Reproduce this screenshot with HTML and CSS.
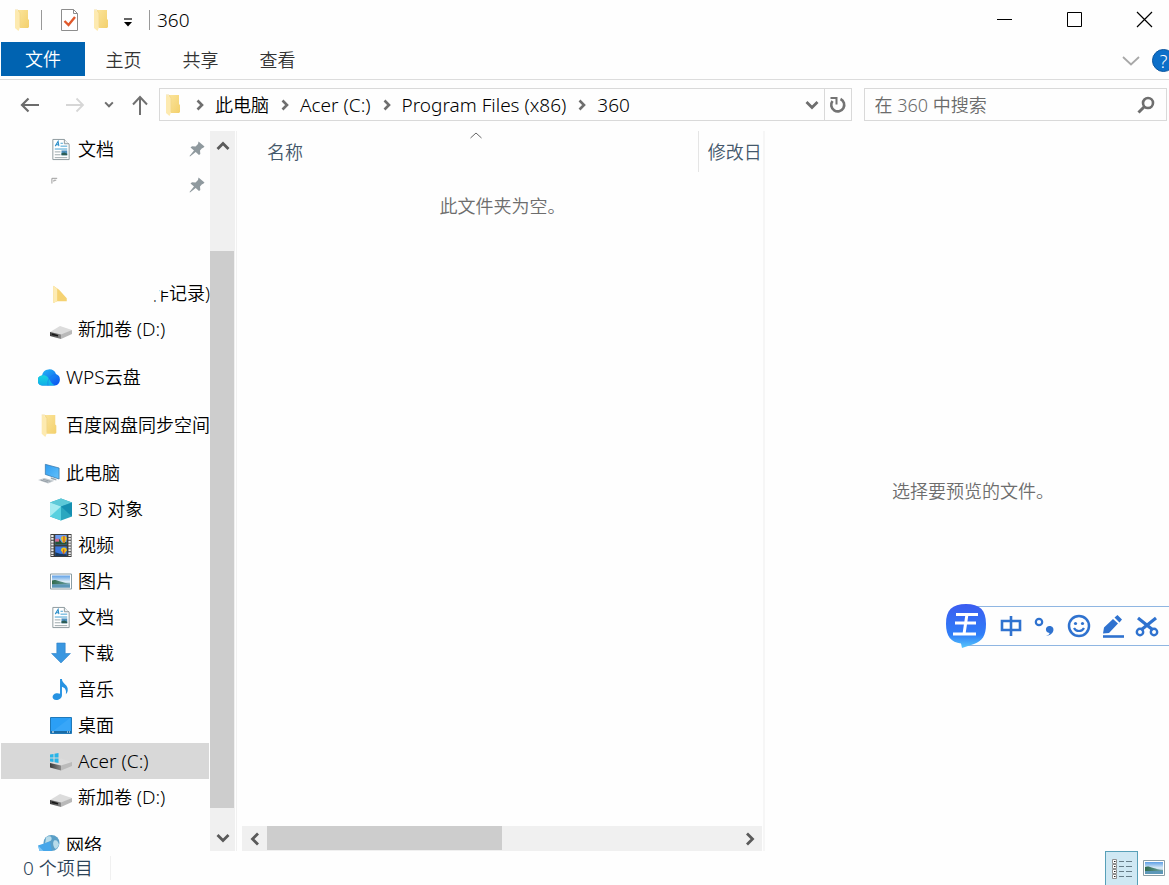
FILE: index.html
```html
<!DOCTYPE html>
<html lang="zh-CN">
<head>
<meta charset="utf-8">
<title>360</title>
<link rel="stylesheet" href="styles.css">
</head>
<body>
<svg class="defs" aria-hidden="true">
  <defs>
    <linearGradient id="gFold" x1="0" y1="0" x2="1" y2="1"><stop offset="0" stop-color="#fbe49b"/><stop offset="1" stop-color="#f3d06c"/></linearGradient>
    <linearGradient id="gCloud" x1="0" y1="0" x2="1" y2="1"><stop offset="0" stop-color="#27c3f5"/><stop offset="1" stop-color="#0a4df0"/></linearGradient>
    <linearGradient id="gTeal" x1="0" y1="0" x2="0" y2="1"><stop offset="0" stop-color="#19d3e0"/><stop offset="1" stop-color="#10aee8"/></linearGradient>
    <linearGradient id="gScreen" x1="0" y1="0" x2="1" y2="1"><stop offset="0" stop-color="#2f9df2"/><stop offset="1" stop-color="#62c1fa"/></linearGradient>
    <linearGradient id="gDisk" x1="0" y1="0" x2="1" y2="0"><stop offset="0" stop-color="#3a3a3a"/><stop offset="1" stop-color="#8a8a8a"/></linearGradient>
    <linearGradient id="gSky" x1="0" y1="0" x2="0" y2="1"><stop offset="0" stop-color="#5d9fe6"/><stop offset="0.5" stop-color="#dcecf6"/><stop offset="1" stop-color="#5f93b4"/></linearGradient>
    <linearGradient id="gLand" x1="0" y1="0" x2="1" y2="0"><stop offset="0" stop-color="#2f6a4c"/><stop offset="1" stop-color="#6fa3a8"/></linearGradient>
    <linearGradient id="gIme" x1="0" y1="0" x2="0" y2="1"><stop offset="0" stop-color="#3b5cf0"/><stop offset="0.7" stop-color="#2f7ef8"/><stop offset="1" stop-color="#58c8fb"/></linearGradient>
  </defs>
  <symbol id="folder" viewBox="0 0 16 22"><path d="M4 1h10v9l1 1v7l-1 1H5z" fill="url(#gFold)"/><path d="M1 1.500h2L6 4v14.500L4.500 22 1 19z" fill="#fdeab0"/><path d="M1 1h3l2 3v14" fill="none" stroke="#f0d588" stroke-width=".7"/></symbol>
  <symbol id="doc" viewBox="0 0 22 24"><path d="M2.500 1.500h12l5 5v16h-17z" fill="#fff" stroke="#8b989c"/><path d="M14.500 1.500v4.500h5" fill="#eef2f3" stroke="#8b989c"/><path d="M5 8.500l3-5 .8 5M6 7h3" stroke="#2d8fc9" stroke-width="1.100" fill="none"/><path d="M10.500 5.500h2.500M10.500 8.500h7" stroke="#409fd0"/><path d="M4.500 11.500h13" stroke="#409fd0"/><path d="M4.500 14.500h6M4.500 17.500h6M4.500 20.500h13" stroke="#9aa5a8"/><path d="M11.500 13h6v5h-6z" fill="#4a8dbb"/><path d="M11.500 16l3-1 3 1.500V18h-6z" fill="#2d5d55"/></symbol>
  <symbol id="disk" viewBox="0 0 22 14"><path d="M0 7L10 1l12 4-11 6z" fill="#dcdcdc"/><path d="M0 7l11 2.500V14L0 11z" fill="url(#gDisk)"/><path d="M11 9.500L22 5v4l-11 5z" fill="#b9b9b9"/><path d="M2 9.300l6 1.500" stroke="#171717" stroke-width="1.400"/></symbol>
  <symbol id="windisk" viewBox="0 0 22 18"><path d="M1 11l10-5 11 4-11 4z" fill="#dcdcdc"/><path d="M0 10.500l11 2.500v5L0 15z" fill="url(#gDisk)"/><path d="M11 13L22 9.500v4L11 18z" fill="#bbb"/><path d="M0 2l3.500-.6V5H0zM4.500 1.200L8.500.5V5h-4zM0 6h3.500v3.600L0 9zM4.500 6h4v4.500l-4-.7z" fill="#27b4e8"/></symbol>
  <symbol id="cloud" viewBox="0 0 22 20"><path d="M5 18a5 5 0 01-1-10A7.300 7.300 0 0118 6.500 6 6 0 0117 18z" fill="url(#gCloud)"/><path d="M5 18a5 5 0 01-1-10c4-1 6.500 2 8 5 1 2 3 4 5 5z" fill="url(#gTeal)"/><path d="M10 18c-1-6 2-10 8-11" fill="none" stroke="#1b6df3" opacity=".5"/></symbol>
  <symbol id="pc" viewBox="0 0 24 22"><path d="M8 1l15 4v12L8 12z" fill="url(#gScreen)" stroke="#3a77a8" stroke-width=".8"/><path d="M14 15l6 2v1.500l-6-1.500z" fill="#98a7b0"/><path d="M0 18l7-2 11 3-7 3z" fill="#c4cbd0"/><path d="M3 18.200l8 2.300M5.500 17.300l8 2.300" stroke="#7c8790" stroke-width=".7"/></symbol>
  <symbol id="cube" viewBox="0 0 22 22"><path d="M0 4L11 0l11 4v14l-11 4L0 18z" fill="#2aa7bf"/><path d="M0 4l11 4v14L0 18z" fill="#57d0df"/><path d="M0 4L11 0l11 4-11 4z" fill="#5cc9d8"/><path d="M11 8L0 18V4z" fill="#a5ebf1"/><path d="M11 8l11-4v14z" fill="#158fb1"/></symbol>
  <symbol id="film" viewBox="0 0 22 24"><path d="M0 0h22v24H0z" fill="#3c3c3c"/><path d="M2 1v22M20 1v22" stroke="#eee" stroke-width="2.500" stroke-dasharray="2 1"/><path d="M5 1h12v10H5z" fill="#6c9bf0"/><path d="M5 13h12v10H5z" fill="#3a78de"/><path d="M5 8l4-3 3 4 5-1v3H5z" fill="#245436"/><path d="M11 5a3 3 0 016 0l-2 4h-2z" fill="#e8c51c"/><path d="M13.500 2h1.200v7h-1.200z" fill="#cf4a32"/><path d="M5 5h4v3H5z" fill="#d7688c"/><path d="M11 17a3 3 0 016 0l-2 3h-2z" fill="#f0c318"/><path d="M5 19l5 1.500 7 .5v2H5z" fill="#19395e"/><path d="M13 16h1.500v5H13z" fill="#cc5d2b"/></symbol>
  <symbol id="pic" viewBox="0 0 22 16"><path d="M.5.5h21v15H.5z" fill="#fff" stroke="#8b9da4"/><path d="M2 2h18v12H2z" fill="url(#gSky)"/><path d="M2 7c4-2 8 2 18 3v1H2z" fill="url(#gLand)"/><path d="M2 11h18v3H2z" fill="#5c97b8"/></symbol>
  <symbol id="down" viewBox="0 0 20 22"><path d="M6 1h8v10h5l-9 9-9-9h5z" fill="#3a97e0" stroke="#2f84ca" stroke-width=".6"/></symbol>
  <symbol id="music" viewBox="0 0 20 24"><path d="M9 1h2c0 5 7 6 6 12-.2 2-1 3-2 4 1-5-1-7-4-8v9c0 3-3 5-6 5-5 0-5-6 0-7 1.500-.2 3 0 4 .5z" fill="#2793e2"/></symbol>
  <symbol id="desk" viewBox="0 0 22 17"><path d="M.5.5h21v16H.5z" fill="#2b9ff6" stroke="#2079b9"/><path d="M1 14h20v2H1z" fill="#1a6ba5"/><path d="M2 15h2M17 15h1M19 15h1" stroke="#fff"/><path d="M3 14L20 1v13z" fill="#46adf9" opacity=".5"/></symbol>
  <symbol id="net" viewBox="0 0 22 22"><circle cx="13.500" cy="8.500" r="8" fill="#5a9fc7"/><path d="M8 3c4-3 7 0 5 3-2 2-5 1-6 4zM16 6c3-1 4 1 5 4-1 3-3 5-4 4s-3-5-1-8z" fill="#b8dcea"/><path d="M0 11l12-4 2 10-11 5z" fill="#46a6e9"/><path d="M0 11l3 11 6-2z" fill="#7bc5f5"/></symbol>
  <symbol id="pin" viewBox="0 0 16 16"><path d="M9.500.5l6 5-1.500 1.500-1 .2-2 2.300.3 3.500-1.300 1L6.700 11 1 15.500.5 15 5 9.500 1.500 6.500 3 5.200l3.500.2L9 3z" fill="#8f999e"/></symbol>
  <symbol id="chev" viewBox="0 0 10 12"><path d="M2.500 1.500L7 6l-4.500 4.500" fill="none" stroke="currentColor" stroke-width="2.600"/></symbol>
  <symbol id="vee" viewBox="0 0 14 10"><path d="M1.500 2L7 7.500 12.500 2" fill="none" stroke="currentColor" stroke-width="2.800"/></symbol>
</svg>

<div class="window">
  <header class="titlebar">
    <svg class="qa-folder"><use href="#folder"/></svg>
    <span class="sep sep-first"></span>
    <button class="plain qa-check" aria-label="属性"><svg width="20" height="24" viewBox="0 0 20 24"><path d="M1.500 1.500h12l4 4v17h-16z" fill="#fff" stroke="#8d8d8d"/><path d="M13.500 1.500v4h4" fill="none" stroke="#8d8d8d"/><path d="M4.500 13l4 4 6.500-8" fill="none" stroke="#e0592c" stroke-width="2.400"/></svg></button>
    <button class="plain qa-new" aria-label="新建文件夹"><svg class="qa-folder"><use href="#folder"/></svg></button>
    <button class="plain qa-more" aria-label="自定义快速访问工具栏"><svg width="10" height="10" viewBox="0 0 10 10"><path d="M1 1h8" stroke="#000" stroke-width="1.200"/><path d="M1 4h8L5 8.500z"/></svg></button>
    <span class="sep"></span>
    <h1 class="title latin">360</h1>
    <div class="win-controls">
      <button class="plain" aria-label="最小化"><svg width="17" height="17"><path d="M1 8.500h15" stroke="#000"/></svg></button>
      <button class="plain" aria-label="最大化"><svg width="17" height="17"><path d="M1.500 1.500h14v14h-14z" fill="none" stroke="#000"/></svg></button>
      <button class="plain" aria-label="关闭"><svg width="17" height="17"><path d="M1 1l15 15M16 1L1 16" stroke="#000" stroke-width="1.200"/></svg></button>
    </div>
  </header>

  <nav class="tabs">
    <button class="tab tab-file">文件</button>
    <button class="tab">主页</button>
    <button class="tab">共享</button>
    <button class="tab">查看</button>
    <div class="tabs-end">
      <button class="plain" aria-label="展开功能区"><svg width="18" height="12" viewBox="0 0 18 12"><path d="M1 2l8 7.500L17 2" fill="none" stroke="#a8a8a8" stroke-width="1.800"/></svg></button>
      <button class="help" aria-label="帮助">?</button>
    </div>
  </nav>

  <div class="addressbar">
    <div class="nav-buttons">
      <button class="plain" aria-label="后退"><svg width="20" height="16" viewBox="0 0 20 16"><path d="M19 8H2M8.500 1.500L2 8l6.500 6.500" fill="none" stroke="#6c6c6c" stroke-width="2.200"/></svg></button>
      <button class="plain nav-forward" aria-label="前进"><svg width="20" height="16" viewBox="0 0 20 16"><path d="M1 8h17M11.500 1.500L18 8l-6.500 6.500" fill="none" stroke="#d6d6d6" stroke-width="1.800"/></svg></button>
      <button class="plain nav-recent" aria-label="最近位置"><svg width="10" height="7"><use href="#vee"/></svg></button>
      <button class="plain nav-up" aria-label="上移"><svg width="16" height="20" viewBox="0 0 16 20"><path d="M8 20V2M1 9.500L8 2l7 7.500" fill="none" stroke="#707070" stroke-width="2"/></svg></button>
    </div>
    <div class="path">
      <svg class="path-folder"><use href="#folder"/></svg>
      <svg class="crumb-chev"><use href="#chev"/></svg>
      <button class="plain crumb">此电脑</button>
      <svg class="crumb-chev"><use href="#chev"/></svg>
      <button class="plain crumb latin">Acer (C:)</button>
      <svg class="crumb-chev"><use href="#chev"/></svg>
      <button class="plain crumb latin">Program Files (x86)</button>
      <svg class="crumb-chev"><use href="#chev"/></svg>
      <button class="plain crumb latin">360</button>
      <button class="plain path-drop" aria-label="历史记录"><svg width="14" height="10"><use href="#vee"/></svg></button>
      <button class="plain refresh" aria-label="刷新"><svg width="18" height="18" viewBox="0 0 18 18"><path d="M11.500 3A6.500 6.500 0 113.500 5" fill="none" stroke="#737373" stroke-width="2.600"/><path d="M1.500 2h6v6.500" fill="none" stroke="#737373" stroke-width="2"/></svg></button>
    </div>
    <label class="search">
      <input type="text" placeholder="在 360 中搜索" aria-label="在 360 中搜索">
      <svg width="18" height="18" viewBox="0 0 18 18"><circle cx="11" cy="7" r="5" fill="none" stroke="#6e6e6e" stroke-width="2.600"/><path d="M7.500 10.500L1.500 16.500" stroke="#6e6e6e" stroke-width="3"/></svg>
    </label>
  </div>

  <main class="content">
    <nav class="tree">
      <a class="item sub" href="#"><svg class="ic"><use href="#doc"/></svg>文档<svg class="pin"><use href="#pin"/></svg></a>
      <a class="item sub" href="#" aria-label="已固定"><svg class="ic" viewBox="0 0 22 24"><path d="M1.500 10V4.500H7M3.500 8V6.500H6" fill="none" stroke="#999"/></svg><svg class="pin"><use href="#pin"/></svg></a>
      <div class="blank"></div>
      <a class="item sub" href="#"><svg class="ic" viewBox="0 0 22 24"><path d="M3 4l6 4 8 9v3H7l-4 2z" fill="#f5d272"/><path d="M3 4l4 3v13l-4 2z" fill="#fdebb4"/></svg><span class="record"><span class="cut">作</span>记录)</span></a>
      <a class="item sub" href="#"><svg class="ic ic-disk"><use href="#disk"/></svg><span>新加卷 <span class="latin">(D:)</span></span></a>
      <a class="item top" href="#"><svg class="ic"><use href="#cloud"/></svg><span><span class="latin">WPS</span>云盘</span></a>
      <a class="item top" href="#"><svg class="ic"><use href="#folder"/></svg>百度网盘同步空间</a>
      <a class="item top" href="#"><svg class="ic"><use href="#pc"/></svg>此电脑</a>
      <a class="item sub" href="#"><svg class="ic"><use href="#cube"/></svg><span><span class="latin">3D </span>对象</span></a>
      <a class="item sub" href="#"><svg class="ic"><use href="#film"/></svg>视频</a>
      <a class="item sub" href="#"><svg class="ic"><use href="#pic"/></svg>图片</a>
      <a class="item sub" href="#"><svg class="ic"><use href="#doc"/></svg>文档</a>
      <a class="item sub" href="#"><svg class="ic"><use href="#down"/></svg>下载</a>
      <a class="item sub" href="#"><svg class="ic"><use href="#music"/></svg>音乐</a>
      <a class="item sub" href="#"><svg class="ic"><use href="#desk"/></svg>桌面</a>
      <a class="item sub selected" href="#" aria-current="true"><svg class="ic"><use href="#windisk"/></svg><span class="latin">Acer (C:)</span></a>
      <a class="item sub" href="#"><svg class="ic ic-disk"><use href="#disk"/></svg><span>新加卷 <span class="latin">(D:)</span></span></a>
      <a class="item top" href="#"><svg class="ic"><use href="#net"/></svg>网络</a>
    </nav>
    <div class="vscroll">
      <button class="plain" aria-label="向上滚动"><svg class="turn-up" width="14" height="10"><use href="#vee"/></svg></button>
      <div class="vtrack"><div class="vthumb"></div></div>
      <button class="plain" aria-label="向下滚动"><svg width="14" height="10"><use href="#vee"/></svg></button>
    </div>
    <section class="files">
      <table class="list">
        <thead><tr>
          <th class="col-name"><svg class="sort" width="12" height="7"><path d="M.500 6L6 1l5.500 5" fill="none" stroke="#666"/></svg>名称</th>
          <th class="col-date">修改日</th>
        </tr></thead>
        <tbody><tr><td class="empty" colspan="2">此文件夹为空。</td></tr></tbody>
      </table>
      <div class="hscroll">
        <button class="plain" aria-label="向左滚动"><svg class="turn-left" width="14" height="10"><use href="#vee"/></svg></button>
        <div class="htrack"><div class="hthumb"></div></div>
        <button class="plain" aria-label="向右滚动"><svg class="turn-right" width="14" height="10"><use href="#vee"/></svg></button>
      </div>
    </section>
    <aside class="preview">选择要预览的文件。</aside>
  </main>

  <footer class="status">
    <span class="count"><span class="latin">0 </span>个项目</span>
    <div class="views">
      <button class="view view-on" aria-label="详细信息"><svg width="22" height="22" viewBox="0 0 22 22"><path d="M1.500 1.500h4v4h-4zM1.500 6.500h4v4h-4zM1.500 11.500h4v4h-4zM1.500 16.500h4v4h-4z" fill="#fff" stroke="#8f8f8f"/><path d="M3 3.500h1.500M3 8.500h1.500M3 13.500h1.500M3 18.500h1.500" stroke="#222"/><path d="M8 3.500h5M15 3.500h6M8 8.500h5M15 8.500h6M8 13.500h5M15 13.500h6M8 18.500h5M15 18.500h6" stroke="#667d88"/></svg></button>
      <button class="view" aria-label="大缩略图"><svg width="22" height="16"><use href="#pic"/></svg></button>
    </div>
  </footer>
</div>

<div class="ime">
  <button class="plain ime-logo" aria-label="王"><svg width="42" height="46" viewBox="0 0 42 46"><path d="M21 1C35 1 41 7 41 21c0 12-4 17-12 20l-12 4-1-4.500C6 39.500 1 33 1 21 1 7 7 1 21 1z" fill="url(#gIme)"/><path d="M11 11.500h22M10 20h21M8 31h23M22 11L19 31" fill="none" stroke="#fff" stroke-width="3"/></svg></button>
  <button class="plain ime-mode" aria-label="中文"><svg width="24" height="24" viewBox="0 0 24 24"><path d="M3 7h18v9H3zM12 2v20" fill="none" stroke="#2f72cf" stroke-width="2.600"/></svg></button>
  <button class="plain" aria-label="标点"><svg width="24" height="24" viewBox="0 0 24 24"><circle cx="6" cy="8" r="3.200" fill="none" stroke="#2f72cf" stroke-width="2.200"/><path d="M13 22c3-1 3.500-2 3.500-3-5-.5-4.500-7 0-7 6 0 5.500 9-3.500 10z" fill="#2f72cf"/></svg></button>
  <button class="plain" aria-label="表情"><svg width="24" height="24" viewBox="0 0 24 24"><circle cx="12" cy="12" r="10" fill="none" stroke="#2f72cf" stroke-width="2.500"/><circle cx="8.500" cy="9.500" r="1.600" fill="#2f72cf"/><circle cx="15.500" cy="9.500" r="1.600" fill="#2f72cf"/><path d="M7 14c2 4 8 4 10 0" fill="none" stroke="#2f72cf" stroke-width="2.200"/></svg></button>
  <button class="plain" aria-label="手写"><svg width="24" height="24" viewBox="0 0 24 24"><path d="M2 19.500l1-6L12 5l5 4.500-9 9.500zM13.500 3.500L16.500 1 21 5.500l-2.500 3z" fill="#2f72cf"/><path d="M2 22.500h21" stroke="#2f72cf" stroke-width="2.600"/></svg></button>
  <button class="plain" aria-label="截图"><svg width="24" height="24" viewBox="0 0 24 24"><path d="M3 4l15 12M21 4L6 16" stroke="#2f72cf" stroke-width="3.200" fill="none"/><circle cx="5" cy="18" r="3.200" fill="none" stroke="#2f72cf" stroke-width="2.400"/><circle cx="19" cy="18" r="3.200" fill="none" stroke="#2f72cf" stroke-width="2.400"/></svg></button>
</div>
</body>
</html>
```
FILE: styles.css
```css
* { box-sizing: border-box; }

body {
  margin: 0;
  background: #fefefe;
  color: #000;
  font-family: "Noto Sans", "Noto Sans CJK SC", sans-serif;
  font-size: 18px;
  font-weight: 350;
  line-height: 24px;
  overflow: hidden;
}

button, input, th, h1 { font: inherit; color: inherit; }
svg { display: block; flex: none; }
.defs { position: absolute; width: 0; height: 0; }

.plain {
  display: flex;
  align-items: center;
  justify-content: center;
  padding: 0;
  border: 0;
  background: none;
}

/* Latin runs are set slightly larger than the Chinese text around them */
.latin { font-size: 19px; line-height: 22px; }

.window { display: flex; flex-direction: column; height: 100vh; }

/* Title bar */
.titlebar { display: flex; align-items: center; height: 42px; padding: 0 16px 3px 14px; }
.qa-folder { width: 16px; height: 22px; }
.sep { width: 1px; height: 20px; background: #999; }
.sep-first { margin-left: 11px; }
.qa-check { margin-left: 18px; }
.qa-new { margin-left: 13px; }
.qa-more { margin: 6px 16px 0 14px; }
.title { margin: 0 0 0 7px; }
.win-controls { display: flex; gap: 53px; margin-left: auto; }

/* Ribbon tabs */
.tabs { display: flex; height: 38px; padding-left: 1px; border-bottom: 1px solid #dcdcdc; overflow: hidden; }
.tab { width: 77px; height: 36px; padding: 0; border: 0; background: none; color: #333; }
.tab-file { width: 84px; height: 34px; background: #0063b1; color: #fff; }
.tabs-end { display: flex; align-items: center; gap: 12px; margin: 0 -6px 0 auto; }
.help { width: 23px; height: 23px; padding: 0; border: 1px solid #0a559f; border-radius: 50%; background: #0c6fc9; color: #fff; line-height: 20px; }

/* Address bar */
.addressbar { display: flex; align-items: flex-start; height: 51px; padding: 8px 2px 0 0; }
.nav-buttons { display: flex; align-items: center; width: 159px; height: 33px; padding-left: 20px; color: #6e6e6e; }
.nav-forward { margin-left: 25px; }
.nav-recent { margin-left: 19px; }
.nav-up { margin-left: 18px; }
.path { display: flex; flex: 1; align-items: center; height: 33px; border: 1px solid #d9d9d9; color: #6e6e6e; }
.path-folder { width: 16px; height: 22px; margin: 0 8px 0 5px; }
.crumb { color: #000; }
.crumb-chev { width: 10px; height: 12px; margin: 0 10px 0 6px; }
.crumb + .crumb-chev { margin: 0 10px 0 11px; }
.path-drop { margin-left: auto; width: 24px; }
.refresh { width: 27px; height: 100%; border-left: 1px solid #d9d9d9; }
.search { display: flex; flex: 0 0 26%; align-items: center; height: 33px; margin-left: 12px; padding: 0 11px 0 10px; border: 1px solid #d9d9d9; }
.search input { flex: 1; min-width: 0; padding: 0; border: 0; outline: 0; background: none; }
.search input::placeholder { color: #6b6b6b; opacity: 1; }

/* Main area */
.content { display: flex; flex: 1; min-height: 0; }

.tree { width: 210px; padding: 0 1px; overflow: hidden; }
.item { display: flex; align-items: center; height: 36px; color: inherit; text-decoration: none; white-space: nowrap; }
.sub { padding-left: 49px; }
.top { padding-left: 37px; margin-top: 12px; }
.ic { width: 22px; height: 23px; margin-right: 6px; }
.ic-disk { height: 14px; margin-top: 6px; }
.blank { height: 72px; }
.pin { width: 16px; height: 16px; margin: 0 4px 0 auto; }
.selected { background: #d8d8d8; }
.record { display: flex; margin-left: 73px; }
/* Only the foot of the left stroke and the lower right part stay visible */
.cut { clip-path: polygon(0 80%, 8px 80%, 8px 40%, 100% 40%, 100% 100%, 0 100%); }

.vscroll { display: flex; flex-direction: column; width: 25px; background: #f0f0f0; color: #5a5a5a; }
.vscroll .plain { height: 30px; }
.vscroll .plain:last-child { height: 26px; }
.vtrack { flex: 1; padding-top: 90px; }
.vthumb { height: 97%; width: 24px; background: #cdcdcd; }
.turn-up { transform: rotate(180deg); }
.turn-left { transform: rotate(90deg); }
.turn-right { transform: rotate(-90deg); }

.files { display: flex; flex: 532; flex-direction: column; min-width: 0; padding-left: 5px; margin-left: 1px; border-left: 1px solid #f1f1f1; border-right: 2px solid #f6f6f6; }
.list { width: 100%; border-collapse: collapse; table-layout: fixed; color: #44586b; }
.list th { height: 41px; padding: 0; text-align: left; font-weight: inherit; }
.col-name { position: relative; border-right: 1px solid #e5e5e5; }
.list .col-name { padding-left: 25px; }
.list .col-date { width: 65px; padding-left: 9px; white-space: nowrap; overflow: hidden; }
.sort { position: absolute; top: 1px; left: 50%; }
.list .empty { height: 68px; padding: 0; text-align: center; color: #6d6d6d; }

.hscroll { display: flex; height: 25px; margin: auto 1px 0 0; background: #f0f0f0; color: #5a5a5a; }
.hscroll .plain { width: 25px; }
.htrack { flex: 1; }
.hthumb { width: 50%; height: 24px; background: #cdcdcd; }

.preview { display: flex; flex: 400; align-items: center; justify-content: center; padding-left: 12px; color: #6d6d6d; }

/* Status bar */
.status { display: flex; height: 34px; padding-left: 23px; color: #2b4257; }
.count { align-self: center; width: 88px; border-right: 1px solid #f0f0f0; }
.views { display: flex; margin-left: auto; }
.view { display: flex; align-items: center; justify-content: center; width: 31px; padding: 0; border: 0; background: none; }
.view-on { width: 33px; border: 1px solid #58a0b8; border-bottom: 0; background: #cfe8f3; }

/* Floating input-method bar */
.ime { position: fixed; top: 606px; right: 0; display: flex; align-items: center; gap: 10px; width: 204px; height: 40px; border: solid #8fb6e2; border-width: 1px 0; background: #fefefe; }
.ime-logo { margin: 0 0 0 -20px; }
.ime-mode { margin-left: 2px; }
```
